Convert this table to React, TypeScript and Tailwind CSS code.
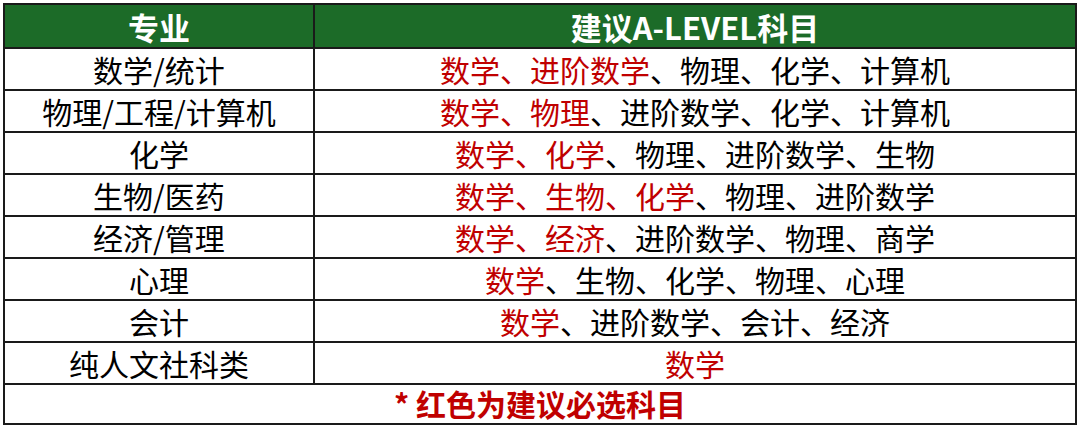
const rows: { major: string; red: string[]; rest: string[] }[] = [
  { major: "数学/统计", red: ["数学", "进阶数学"], rest: ["物理", "化学", "计算机"] },
  { major: "物理/工程/计算机", red: ["数学", "物理"], rest: ["进阶数学", "化学", "计算机"] },
  { major: "化学", red: ["数学", "化学"], rest: ["物理", "进阶数学", "生物"] },
  { major: "生物/医药", red: ["数学", "生物", "化学"], rest: ["物理", "进阶数学"] },
  { major: "经济/管理", red: ["数学", "经济"], rest: ["进阶数学", "物理", "商学"] },
  { major: "心理", red: ["数学"], rest: ["生物", "化学", "物理", "心理"] },
  { major: "会计", red: ["数学"], rest: ["进阶数学", "会计", "经济"] },
  { major: "纯人文社科类", red: ["数学"], rest: [] },
];

function Subjects({ red, rest }: { red: string[]; rest: string[] }) {
  return (
    <>
      <span className="text-[#c00000]">{red.join("、")}</span>
      {rest.length > 0 && <span>{"、" + rest.join("、")}</span>}
    </>
  );
}

export default function App() {
  return (
    <div
      className="w-[1080px] h-[433px] bg-white pt-[3px] pl-[3px]"
      style={{ fontFamily: '"Noto Sans CJK SC", "Noto Sans", sans-serif' }}
    >
      <table className="w-[1072px] border-collapse table-fixed text-black">
        <colgroup>
          <col className="w-[310px]" />
          <col className="w-[762px]" />
        </colgroup>
        <thead>
          <tr className="h-[44px] bg-[#1c6b28] text-white font-bold text-[31px] leading-none">
            <th className="border-2 border-[#1a1a1a] text-center align-middle">专业</th>
            <th className="border-2 border-[#1a1a1a] text-center align-middle">建议A-LEVEL科目</th>
          </tr>
        </thead>
        <tbody className="text-[30px] leading-none">
          {rows.map((r) => (
            <tr key={r.major} className="h-[42px]">
              <td className="border-2 border-[#1a1a1a] text-center align-middle">{r.major}</td>
              <td className="border-2 border-[#1a1a1a] text-center align-middle">
                <Subjects red={r.red} rest={r.rest} />
              </td>
            </tr>
          ))}
          <tr className="h-[40px]">
            <td
              colSpan={2}
              className="border-2 border-[#1a1a1a] text-center align-middle text-[#c00000] font-bold text-[30px] pb-[3px]"
            >
              * 红色为建议必选科目
            </td>
          </tr>
        </tbody>
      </table>
    </div>
  );
}
